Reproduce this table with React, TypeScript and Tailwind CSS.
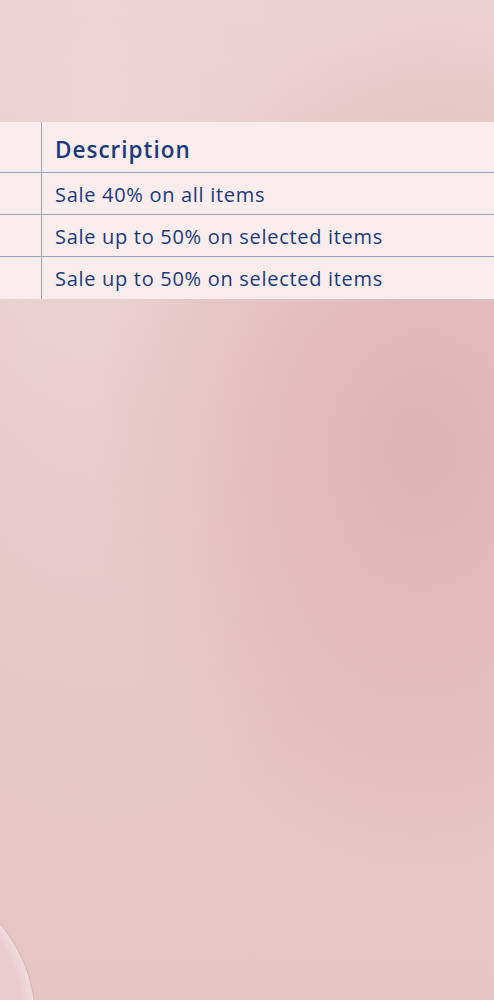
import React from "react";

const rows = [
  "Sale 40% on all items",
  "Sale up to 50% on selected items",
  "Sale up to 50% on selected items",
];

export default function App() {
  return (
    <div
      className="relative w-full h-[1000px] overflow-hidden bg-[#e6c6c7] bg-[radial-gradient(ellipse_at_85%_45%,#deb3b4_0%,rgba(222,179,180,0)_55%),radial-gradient(ellipse_at_20%_10%,#ecd3d4_0%,rgba(236,211,212,0)_60%),linear-gradient(180deg,#ebd0d1_0%,#e6c7c8_40%,#e5c4c4_100%)]"
      style={{ fontFamily: '"Open Sans", "Noto Sans", sans-serif' }}
    >
      {/* Promo table */}
      <div className="pt-[122px]">
        <div className="bg-[#f8eced] text-[#1d3a78]">
          <div className="grid grid-cols-[42px_1fr] h-[51px] border-b border-[#9aa5c0]">
            <div className="border-r border-[#9aa5c0]" />
            <div className="flex items-center pl-[13px] pt-[5px] text-[22.5px] font-semibold tracking-[1px]">Description</div>
          </div>
          {rows.map((r, i) => (
            <div
              key={i}
              className={`grid grid-cols-[42px_1fr] h-[42px] ${i < rows.length - 1 ? "border-b border-[#9aa5c0]" : ""}`}
            >
              <div className="border-r border-[#9aa5c0]" />
              <div className="flex items-center pl-[13px] pt-[2px] text-[20px] tracking-[0.7px]">{r}</div>
            </div>
          ))}
        </div>
      </div>

      {/* Bottom-left bubble edge */}
      <div className="absolute left-[-260px] top-[872px] w-[296px] h-[400px] rounded-full bg-[#e9cccd] border-r border-[#d9b2b3] shadow-[inset_-6px_0_10px_rgba(255,255,255,0.35)]" />
    </div>
  );
}
